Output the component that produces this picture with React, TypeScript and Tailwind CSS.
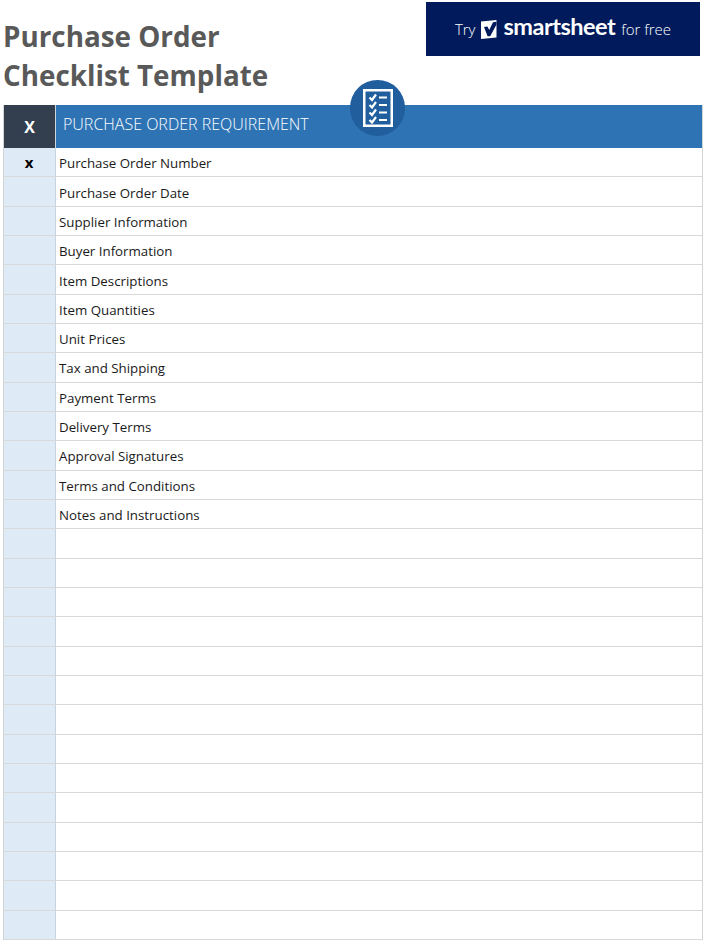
import React from "react";

const items = [
  "Purchase Order Number",
  "Purchase Order Date",
  "Supplier Information",
  "Buyer Information",
  "Item Descriptions",
  "Item Quantities",
  "Unit Prices",
  "Tax and Shipping",
  "Payment Terms",
  "Delivery Terms",
  "Approval Signatures",
  "Terms and Conditions",
  "Notes and Instructions",
];

const rows = [...items, ...Array(14).fill("")];

function SmartsheetMark() {
  return (
    <svg width="16" height="19" viewBox="0 0 16 19">
      <path d="M0 1.5 L15.5 0 V17.5 L0 19 Z" fill="#ffffff" />
      <path d="M3 7 L6.5 6.5 L8.2 10 L12 2.2 L15.5 1.8 V4.5 L9.2 16.2 H6.6 Z" fill="#001a5b" />
    </svg>
  );
}

function ChecklistIcon() {
  const ys = [8.5, 16, 23.5, 31];
  return (
    <svg width="30" height="38" viewBox="0 0 30 38">
      <rect x="1.25" y="1.25" width="27.5" height="35.5" fill="none" stroke="#ffffff" strokeWidth="2.5" />
      {ys.map((y) => (
        <g key={y}>
          <path d={`M6.5 ${y} L9 ${y + 2.5} L13 ${y - 3}`} fill="none" stroke="#ffffff" strokeWidth="2.2" />
          <rect x="16" y={y - 1} width="8" height="2" fill="#ffffff" />
        </g>
      ))}
    </svg>
  );
}

export default function App() {
  return (
    <div className="relative w-[705px] h-[942px] bg-white overflow-hidden font-['Open_Sans',sans-serif]">
      <div className="flex justify-between h-[105px]">
        <h1 className="pl-[3px] pt-[17px] text-[27.8px] leading-[39px] font-bold text-[#595959]">
          Purchase Order
          <br />
          Checklist Template
        </h1>
        <div className="mt-[2px] mr-[5px] w-[274px] h-[54px] bg-[#001a5b] flex items-center justify-center gap-[6px] text-white">
          <span className="text-[15px] font-light">Try</span>
          <SmartsheetMark />
          <span className="text-[23.5px] font-bold tracking-[-0.5px] leading-none -mt-[5px] font-['Lato',sans-serif]">smartsheet</span>
          <span className="text-[15px] font-light">for free</span>
        </div>
      </div>

      {/* table */}
      <div className="mx-[3px] w-[700px] border-l border-r border-[#d0d5da]">
        <div className="flex h-[43px]">
          <div className="w-[52px] bg-[#333f4f] flex items-center justify-center text-white font-bold text-[16px] border-r border-[#d0d5da]">
            X
          </div>
          <div className="flex-1 bg-[#2e74b5] pl-[7px] pt-[7px] text-white text-[16px] font-light">
            PURCHASE ORDER REQUIREMENT
          </div>
        </div>
        {rows.map((label, i) => (
          <div key={i} className="flex h-[29.33px] border-b border-[#d9d9d9]">
            <div className="w-[52px] bg-[#deeaf6] border-r border-[#c9d3de] flex items-center justify-center pt-[1px] pr-[1px] text-[15px] font-bold text-black">
              {i === 0 ? "x" : ""}
            </div>
            <div className="flex-1 pl-[3px] pt-[4px] flex items-center text-[13.3px] text-[#1a1a1a]">{label}</div>
          </div>
        ))}
      </div>

      {/* round icon sits over the header bar */}
      <div className="absolute left-[350px] top-[80px] w-[55px] h-[56px] rounded-full bg-[#215e9e] flex items-center justify-center">
        <ChecklistIcon />
      </div>
    </div>
  );
}
